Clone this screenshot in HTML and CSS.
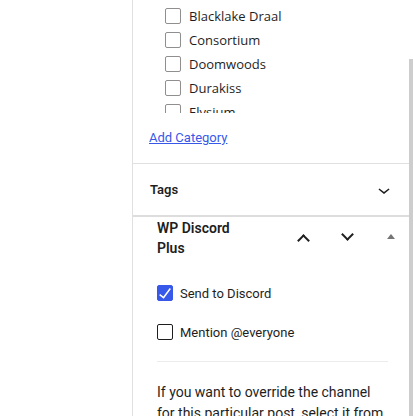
FILE: index.html
```html
<!DOCTYPE html>
<html>
<head>
<meta charset="utf-8">
<link rel="stylesheet" href="styles.css">
</head>
<body>
<div class="page">
  <div class="canvas"></div>
  <aside class="sidebar">
    <section class="panel categories">
      <div class="cat-list">
        <label class="cat-row"><span class="box"></span><span>Blacklake Draal</span></label>
        <label class="cat-row"><span class="box"></span><span>Consortium</span></label>
        <label class="cat-row"><span class="box"></span><span>Doomwoods</span></label>
        <label class="cat-row"><span class="box"></span><span>Durakiss</span></label>
        <label class="cat-row"><span class="box"></span><span>Elysium</span></label>
      </div>
      <a class="add-cat" href="#">Add Category</a>
    </section>
    <section class="panel tags">
      <span class="panel-title">Tags</span>
      <svg class="chev" width="24" height="24" viewBox="0 0 24 24"><path d="M17.5 11.6L12 16l-5.5-4.4.9-1.2L12 14l4.6-3.6 1 1.2z"/></svg>
    </section>
    <section class="panel metabox">
      <div class="mb-header">
        <h2 class="mb-title">WP Discord Plus</h2>
        <div class="mb-actions">
          <span class="mb-btn"><span class="arrow up"></span></span>
          <span class="mb-btn"><span class="arrow down"></span></span>
          <span class="mb-btn"><span class="tri"></span></span>
        </div>
      </div>
      <div class="mb-body">
        <label class="opt"><span class="cb checked"><svg width="16" height="16" viewBox="4 4 16 16"><path d="M16.7 7.1l-6.3 8.5-3.3-2.5-.9 1.2 4.5 3.4L17.9 7.9z"/></svg></span><span>Send to Discord</span></label>
        <label class="opt second"><span class="cb"></span><span>Mention @everyone</span></label>
        <hr class="sep">
        <p class="note">If you want to override the channel for this particular post, select it from the list below.</p>
      </div>
    </section>
    <div class="scrollbar"></div>
  </aside>
</div>
</body>
</html>
```
FILE: styles.css
```css
* { box-sizing: border-box; }
html, body { margin: 0; padding: 0; background: #fff; }
body {
  width: 413px;
  height: 416px;
  overflow: hidden;
  font-family: Roboto, "Liberation Sans", sans-serif;
  color: #1e1e1e;
}
.page { display: flex; height: 416px; }
.canvas { width: 132px; flex-shrink: 0; background: #fff; }
.sidebar {
  position: relative;
  width: 281px;
  border-left: 1px solid #e0e0e0;
  display: flex;
  flex-direction: column;
  overflow: hidden;
}
.panel { flex-shrink: 0; }
.categories { padding-bottom: 15px; }
.cat-list {
  height: 113px;
  overflow: hidden;
  padding: 4px 0 0 32px;
  font-family: "Open Sans", "Noto Sans", sans-serif;
  font-size: 13px;
  color: #1e1e1e;
}
.cat-row { display: flex; align-items: center; height: 24px; gap: 8px; }
.box {
  width: 16px; height: 16px;
  border: 1px solid #8f8f8f;
  border-radius: 2px;
  flex-shrink: 0;
}
.add-cat {
  display: block;
  margin: 15px 0 0 16px;
  font-size: 13px;
  line-height: 20px;
  color: #3858e9;
  text-decoration: underline;
  width: max-content;
}
.tags {
  border-top: 1px solid #e0e0e0;
  height: 52px;
  display: flex;
  align-items: center;
  justify-content: space-between;
  padding: 0 17px 0 17px;
}
.panel-title { font-size: 13px; font-weight: 600; }
.chev { fill: #1e1e1e; }
.metabox { border-top: 2px solid #dddddd; }
.mb-header { display: flex; align-items: center; }
.mb-title {
  flex: 1;
  min-width: 0;
  margin: 1px 0 0;
  padding: 0 30px 0 24px;
  font-size: 14px;
  line-height: 20px;
  font-weight: 600;
}
.mb-actions { display: flex; }
.mb-btn {
  width: 44px; height: 36px;
  display: flex; align-items: center; justify-content: center;
}
.arrow {
  width: 9px; height: 9px;
  border-style: solid;
  border-color: #1e1e1e;
  border-width: 2px 2px 0 0;
}
.arrow.up { transform: translateY(3px) rotate(-45deg); }
.arrow.down { transform: translateY(-3px) rotate(135deg); }
.tri {
  width: 0; height: 0;
  border-left: 4.5px solid transparent;
  border-right: 4.5px solid transparent;
  border-bottom: 5px solid #757575;
  transform: translate(0, -1px);
}
.mb-body { padding: 25px 25px 0 24px; }
.opt {
  display: flex; align-items: center; gap: 7px;
  height: 20px;
  font-size: 13px;
}
.opt.second { margin-top: 19px; }
.cb {
  width: 16px; height: 16px;
  border: 1px solid #1e1e1e;
  border-radius: 2px;
  flex-shrink: 0;
  display: flex;
}
.cb.checked { background: #3858e9; border-color: #3858e9; }
.cb.checked svg { fill: #fff; margin: -1px; }
.sep { margin: 19px 0 0; border: 0; border-top: 1px solid #ececec; }
.note {
  margin: 20px 0 0;
  font-size: 14px;
  line-height: 21px;
}
.scrollbar {
  position: absolute;
  right: 0; top: 59px; bottom: 0;
  width: 4px;
  background: #cdcdcd;
}
```
